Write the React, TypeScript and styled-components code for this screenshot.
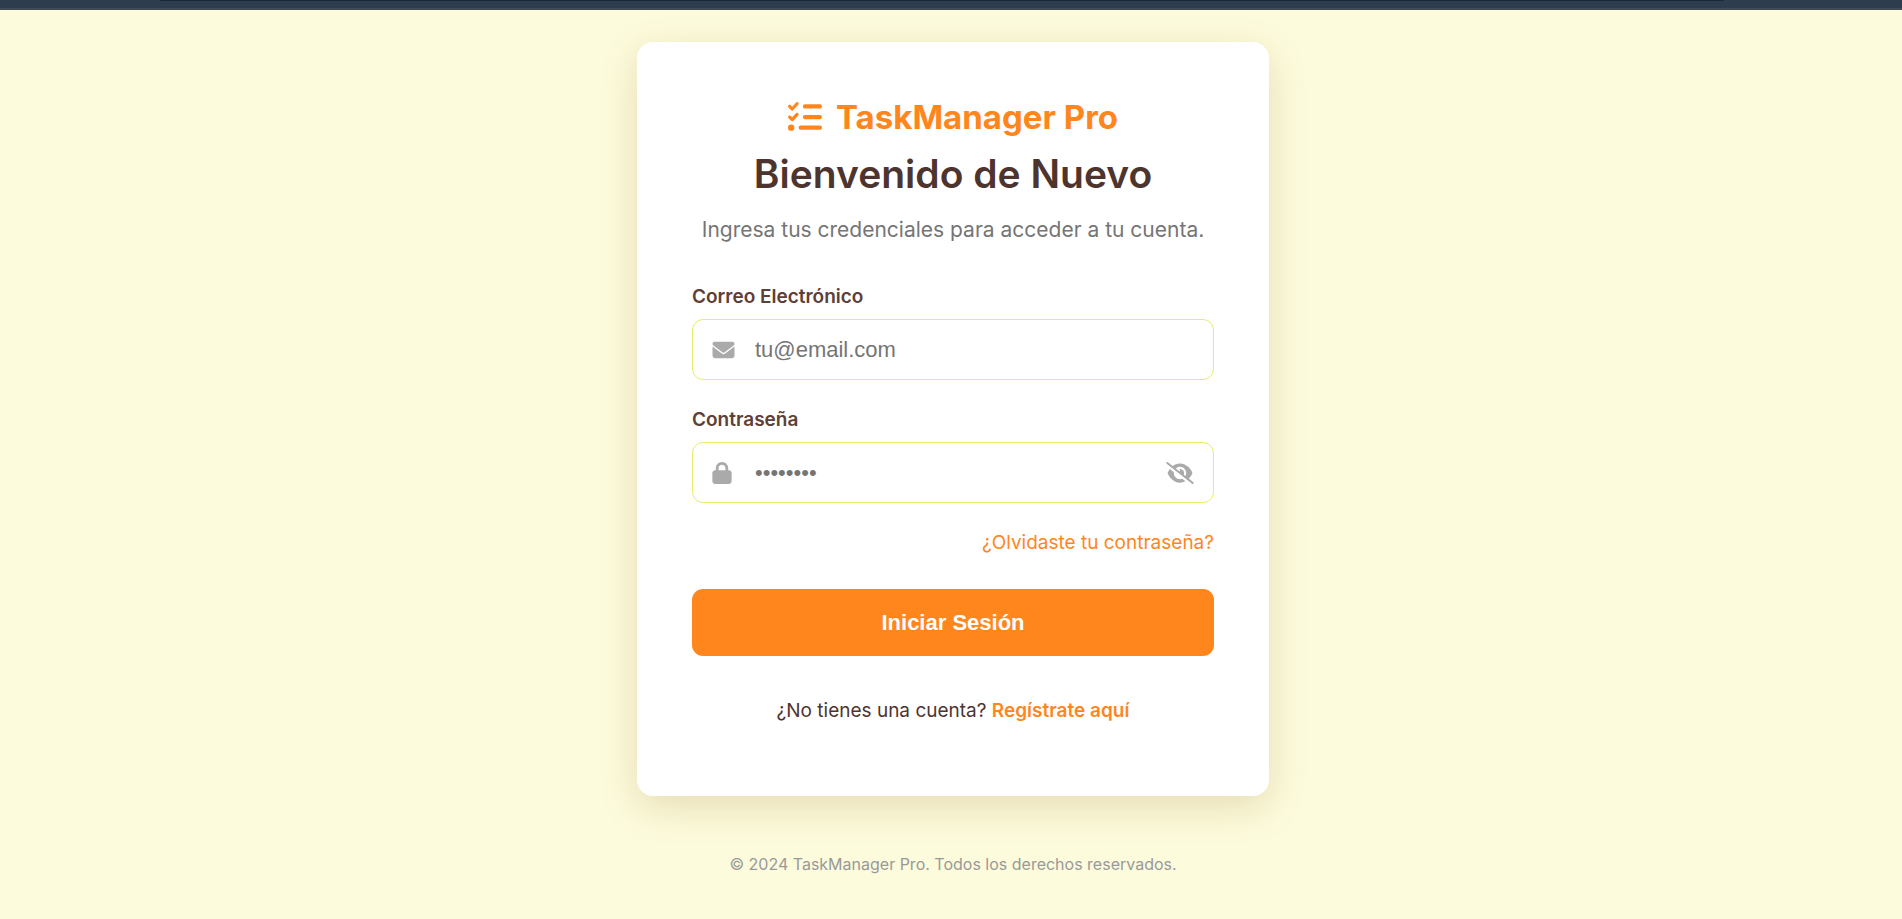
import React, { useState } from 'react';
import styled, { createGlobalStyle } from 'styled-components';
import { FaListCheck, FaEnvelope, FaLock, FaEyeSlash, FaEye } from 'react-icons/fa6';

const colors = {
  page: '#fcfbdc',
  orange: '#ff861d',
  brown: '#4e342e',
  label: '#5d4037',
  grey: '#757575',
  icon: '#aaaaaa',
  border: '#e8ee68',
};

const GlobalStyle = createGlobalStyle`
  *, *::before, *::after { box-sizing: border-box; }
  body {
    margin: 0;
    background: ${colors.page};
    color: ${colors.brown};
    font-family: Inter, 'Liberation Sans', sans-serif;
  }
`;

const Page = styled.div`
  min-height: 100vh;
  display: flex;
  flex-direction: column;
`;

const TopBar = styled.div`
  height: 10px;
  padding: 0 178px 0 160px;
  background: #2e3d4e;
  border-bottom: 2px solid #424a52;
`;

const TopBarLine = styled.div`
  height: 1px;
  background: #18283a;
`;

const Main = styled.main`
  flex: 1;
  display: flex;
  flex-direction: column;
  align-items: center;
  padding: 32px 16px 42px 20px;
`;

const Card = styled.section`
  width: 100%;
  max-width: 632px;
  padding: 55px 55px 71px;
  border-radius: 16px;
  background: #ffffff;
  box-shadow: 0 11px 38px rgba(150, 100, 30, 0.2);
`;

const Header = styled.header`
  text-align: center;
`;

const Brand = styled.div`
  display: flex;
  align-items: center;
  justify-content: center;
  gap: 14px;
  color: ${colors.orange};
  font-size: 33px;
  line-height: 40px;
  font-weight: 700;
`;

const Title = styled.h1`
  margin: 8px 0 0;
  font-size: 39px;
  line-height: 58px;
  font-weight: 600;
`;

const Subtitle = styled.p`
  margin: 11px 0 0;
  color: ${colors.grey};
  font-size: 21px;
  line-height: 32px;
`;

const Form = styled.form`
  margin-top: 37px;
`;

const Field = styled.div`
  margin-bottom: 26px;
`;

const Label = styled.label`
  display: block;
  margin-bottom: 8px;
  color: ${colors.label};
  font-size: 19px;
  line-height: 28px;
  font-weight: 600;
`;

const InputBox = styled.div`
  display: flex;
  align-items: center;
  height: 61px;
  padding: 0 19px;
  border: 1px solid ${colors.border};
  border-radius: 11px;
  color: ${colors.icon};
`;

const IconSlot = styled.span<{ $width: number }>`
  display: flex;
  flex: none;
  width: 43px;

  svg {
    width: ${(p) => p.$width}px;
    height: 22px;
  }
`;

const Input = styled.input`
  flex: 1;
  min-width: 0;
  height: 100%;
  padding: 0;
  border: 0;
  outline: 0;
  background: transparent;
  color: ${colors.brown};
  font-family: 'Liberation Sans', Arial, sans-serif;
  font-size: 22px;
  &::placeholder { color: ${colors.grey}; }
`;

const ToggleButton = styled.button`
  display: flex;
  flex: none;
  padding: 0;
  border: 0;
  background: none;
  color: inherit;
  cursor: pointer;

  svg {
    width: 28px;
    height: 22px;
  }
`;

const Link = styled.a<{ $strong?: boolean }>`
  color: ${colors.orange};
  font-weight: ${(p) => (p.$strong ? 600 : 400)};
  text-decoration: none;
`;

const ForgotRow = styled.div`
  margin-bottom: 32px;
  text-align: right;
  font-size: 19px;
  line-height: 28px;
`;

const SubmitButton = styled.button`
  display: block;
  width: 100%;
  height: 67px;
  border: 0;
  border-radius: 11px;
  background: ${colors.orange};
  color: #ffffff;
  font-family: 'Liberation Sans', Arial, sans-serif;
  font-size: 22px;
  font-weight: 600;
  cursor: pointer;
`;

const SignUp = styled.p`
  margin: 41px 0 0;
  text-align: center;
  font-size: 19px;
  line-height: 28px;
`;

const Footer = styled.footer`
  margin-top: 56px;
  color: #999999;
  font-size: 16px;
  line-height: 24px;
  text-align: center;
`;

export default function App() {
  const [visible, setVisible] = useState(false);
  return (
    <Page>
      <GlobalStyle />
      <TopBar>
        <TopBarLine />
      </TopBar>
      <Main>
        <Card>
          <Header>
            <Brand>
              <FaListCheck size={34} aria-hidden />
              <span>TaskManager Pro</span>
            </Brand>
            <Title>Bienvenido de Nuevo</Title>
            <Subtitle>Ingresa tus credenciales para acceder a tu cuenta.</Subtitle>
          </Header>
          <Form onSubmit={(e) => e.preventDefault()}>
            <Field>
              <Label htmlFor="email">Correo Electrónico</Label>
              <InputBox>
                <IconSlot $width={23}>
                  <FaEnvelope aria-hidden />
                </IconSlot>
                <Input id="email" type="email" placeholder="tu@email.com" />
              </InputBox>
            </Field>
            <Field>
              <Label htmlFor="password">Contraseña</Label>
              <InputBox>
                <IconSlot $width={20}>
                  <FaLock aria-hidden />
                </IconSlot>
                <Input id="password" type={visible ? 'text' : 'password'} placeholder="••••••••" />
                <ToggleButton
                  type="button"
                  aria-label="Mostrar contraseña"
                  onClick={() => setVisible(!visible)}
                >
                  {visible ? <FaEye aria-hidden /> : <FaEyeSlash aria-hidden />}
                </ToggleButton>
              </InputBox>
            </Field>
            <ForgotRow>
              <Link href="#recuperar">¿Olvidaste tu contraseña?</Link>
            </ForgotRow>
            <SubmitButton type="submit">Iniciar Sesión</SubmitButton>
          </Form>
          <SignUp>
            ¿No tienes una cuenta?{' '}
            <Link href="#registro" $strong>
              Regístrate aquí
            </Link>
          </SignUp>
        </Card>
        <Footer>© 2024 TaskManager Pro. Todos los derechos reservados.</Footer>
      </Main>
    </Page>
  );
}
